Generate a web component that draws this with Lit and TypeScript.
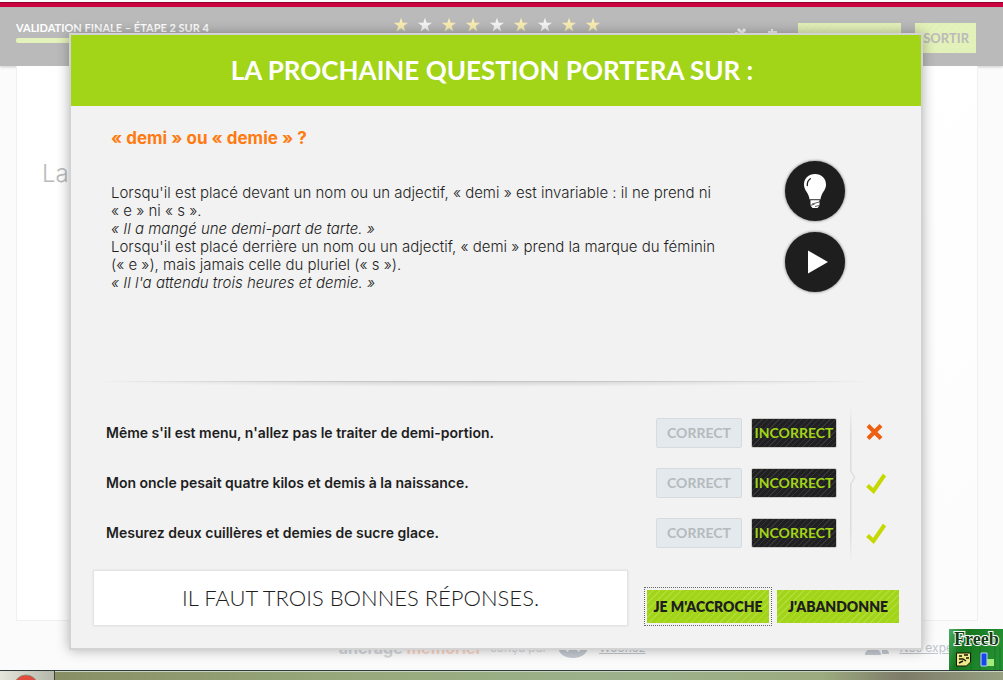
import { LitElement, html, css, svg } from "lit";
import { customElement, property } from "lit/decorators.js";

const BULB = svg`
  <path fill="#fff" d="M20 0C13.500 0 9 4.500 9 10.500c0 5 3 7 4.500 11 .8 2 .9 3 1 4h11c.1-1 .2-2 1-4 1.500-4 4.500-6 4.500-11C31 4.500 26.500 0 20 0z"/>
  <path fill="none" stroke="#1e1e1e" stroke-width="1.300" stroke-linecap="round" d="M12.300 11.500c-.2-3 .8-5.300 3-6.800"/>
  <path fill="#fff" d="M15.500 26h9v5.500L22.500 34h-5l-2-2.500z"/>
  <path stroke="#1e1e1e" stroke-width=".7" fill="none" d="M14.500 25.800h11M17 30l9-2.500M14.500 31.500l5-1.200M20 32.500l6-1.500"/>`;

@customElement("verdict-mark")
class VerdictMark extends LitElement {
  @property({ type: Boolean }) right = false;
  static styles = css`
    :host { display: block; width: 22px; height: 22px; }
    svg { display: block; }
  `;
  render() {
    return this.right
      ? html`<svg width="22" height="22" viewBox="0 0 22 22" role="img" aria-label="Bonne réponse"><path d="M2.500 13.500l6 5.500L19.500 3" fill="none" stroke="#c6d800" stroke-width="4"/></svg>`
      : html`<svg width="22" height="22" viewBox="0 0 22 22" role="img" aria-label="Mauvaise réponse"><path d="M3 3.500l13 13M16 3.500l-13 13" fill="none" stroke="#ee6010" stroke-width="4"/></svg>`;
  }
}

@customElement("rule-dialog")
class RuleDialog extends LitElement {
  static styles = css`
    :host {
      display: block;
      box-sizing: border-box;
      border: 2px solid #d3d3d3;
      background: #f2f2f2;
      box-shadow: 0 0 12px rgba(0, 0, 0, 0.3);
      color: #1e1e1e;
      font-family: Inter, "Liberation Sans", sans-serif;
    }
    .title {
      margin: 0;
      background: #a2d417;
      color: #fff;
      font: 700 26px/71px Lato, sans-serif;
      text-align: center;
      white-space: nowrap;
      padding-right: 8px;
    }
    .lesson {
      display: grid;
      grid-template-columns: 1fr 60px;
      padding: 22px 76px 0 40px;
      min-height: 252px;
    }
    .topic { margin: 0 0 36px; font-size: 17px; line-height: 20px; font-weight: 700; color: #ff7a10; }
    .text { margin: 0; font-size: 15px; line-height: 18px; font-weight: 300; white-space: nowrap; }
    .tools { display: flex; flex-direction: column; gap: 11px; padding-top: 33px; }
    .round {
      display: grid;
      place-items: center;
      width: 60px;
      height: 60px;
      padding: 0;
      border: 0;
      border-radius: 50%;
      background: #1e1e1e;
      box-shadow: 0 0 3px rgba(0, 0, 0, 0.6);
    }
    .rule {
      height: 6px;
      margin: 1px 46px 0 22px;
      border: 0;
      background:
        linear-gradient(90deg, transparent, #c6c6c6 35%, #c6c6c6 65%, transparent) top / 100% 1px no-repeat,
        radial-gradient(ellipse 50% 100% at 50% 0, rgba(0, 0, 0, 0.14), transparent);
    }
    .quiz { display: grid; grid-template-columns: 1fr 14px 22px; column-gap: 2px; padding: 17px 34px 0 35px; }
    .answers, .marks { display: grid; gap: 20px; margin: 0; padding: 14px 0; list-style: none; }
    .answer { display: grid; grid-template-columns: 1fr 86px 86px; column-gap: 9px; align-items: center; height: 30px; padding-right: 10px; }
    .phrase { font-size: 14px; line-height: 18px; font-weight: 600; white-space: nowrap; }
    .choice {
      box-sizing: border-box;
      height: 30px;
      padding: 0;
      border: 1px solid #d7dbdd;
      border-radius: 2px;
      background: #e4e9ed;
      color: #b4babd;
      font: 700 14px/28px Lato, sans-serif;
    }
    .picked {
      border-color: #cbcbc8;
      color: #a2d417;
      background: repeating-linear-gradient(135deg, #201f21 0 3px, #353436 3px 4px);
    }
    .brace { display: block; height: 100%; width: 14px; }
    .mark { display: grid; place-items: center; height: 30px; }
    .bottom { display: grid; grid-template-columns: 1fr auto; gap: 16px; align-items: center; padding: 8px 22px 22px; }
    .notice {
      margin: 0;
      background: #fff;
      border: 1px solid #e4e4e4;
      box-shadow: 0 0 2px rgba(0, 0, 0, 0.1);
      text-align: center;
      font: 300 22px/54px Lato, sans-serif;
      white-space: nowrap;
    }
    .actions { display: flex; gap: 5px; align-items: center; padding-top: 17px; }
    .action {
      box-sizing: border-box;
      width: 122px;
      height: 33px;
      padding: 0;
      border: 0;
      color: #1e1e1e;
      background: repeating-linear-gradient(135deg, #a2d417 0 4px, #b1dc3b 4px 5px);
      font: 800 14px/33px Lato, sans-serif;
    }
    .focus { padding: 2px; border: 1px dotted #666; }
    .focus .action { display: block; }
  `;

  private answers = [
    { phrase: "Même s'il est menu, n'allez pas le traiter de demi-portion.", right: false },
    { phrase: "Mon oncle pesait quatre kilos et demis à la naissance.", right: true },
    { phrase: "Mesurez deux cuillères et demies de sucre glace.", right: true },
  ];

  render() {
    return html`
      <h1 class="title">LA PROCHAINE QUESTION PORTERA SUR :</h1>
      <section class="lesson">
        <div>
          <h2 class="topic">« demi » ou « demie » ?</h2>
          <p class="text">
            Lorsqu'il est placé devant un nom ou un adjectif, « demi » est invariable : il ne prend ni<br />
            « e » ni « s ».<br />
            <em>« Il a mangé une demi-part de tarte. »</em><br />
            Lorsqu'il est placé derrière un nom ou un adjectif, « demi » prend la marque du féminin<br />
            (« e »), mais jamais celle du pluriel (« s »).<br />
            <em>« Il l'a attendu trois heures et demie. »</em>
          </p>
        </div>
        <div class="tools">
          <button class="round" aria-label="Astuce"><svg width="40" height="34" viewBox="0 0 40 34">${BULB}</svg></button>
          <button class="round" aria-label="Lecture"><svg width="26" height="24" viewBox="0 0 26 24"><path fill="#fff" d="M6 .5v23L26 12z"/></svg></button>
        </div>
      </section>
      <hr class="rule" />
      <section class="quiz">
        <ul class="answers">
          ${this.answers.map(
            (a) => html`<li class="answer">
              <span class="phrase">${a.phrase}</span>
              <button class="choice">CORRECT</button>
              <button class="choice picked">INCORRECT</button>
            </li>`
          )}
        </ul>
        <svg class="brace" viewBox="0 0 14 158" preserveAspectRatio="none" aria-hidden="true">
          <defs>
            <linearGradient id="fade" x2="0" y2="1">
              <stop offset="0" stop-color="#dcdcdc" stop-opacity="0" />
              <stop offset=".2" stop-color="#dcdcdc" />
              <stop offset=".8" stop-color="#dcdcdc" />
              <stop offset="1" stop-color="#dcdcdc" stop-opacity="0" />
            </linearGradient>
          </defs>
          <path fill="url(#fade)" d="M1 0h1.500v67l4 6.500-4 6.500v78H1V80l4-6.500L1 67z" />
        </svg>
        <ul class="marks">
          ${this.answers.map((a) => html`<li class="mark"><verdict-mark ?right=${a.right}></verdict-mark></li>`)}
        </ul>
      </section>
      <section class="bottom">
        <p class="notice">IL FAUT TROIS BONNES RÉPONSES.</p>
        <div class="actions">
          <div class="focus"><button class="action">JE M'ACCROCHE</button></div>
          <button class="action">J'ABANDONNE</button>
        </div>
      </section>
    `;
  }
}

@customElement("app-root")
class AppRoot extends LitElement {
  static styles = css`
    :host {
      display: flex;
      flex-direction: column;
      position: relative;
      height: 100vh;
      min-height: 660px;
      overflow: hidden;
      background: #fbfbfb;
      font-family: Inter, "Liberation Sans", sans-serif;
    }
    .strip { flex: none; height: 4px; margin-top: 2px; border-top: 1px solid #90002c; background: #cc0040; }
    .top {
      flex: none;
      box-sizing: border-box;
      display: grid;
      grid-template-columns: 1fr auto 1fr;
      height: 59px;
      padding: 0 27px 0 16px;
      background: #bababa;
      box-shadow: 0 1px 3px rgba(0, 0, 0, 0.2);
    }
    .step { padding-top: 13px; color: #fff; font: 700 11px/16px Lato, sans-serif; white-space: nowrap; }
    .bar { width: 188px; height: 5px; margin-top: 2px; border-radius: 2px; background: #e3f1ba; }
    .stars { display: flex; gap: 8px; padding-top: 10px; }
    .star { width: 16px; height: 16px; }
    .right { display: flex; justify-content: flex-end; gap: 14px; padding-top: 16px; }
    .specks { width: 44px; height: 16px; margin-right: 6px; }
    .ghost {
      box-sizing: border-box;
      height: 30px;
      padding: 0 7px;
      border: 0;
      background: repeating-linear-gradient(135deg, #e3f1ba 0 4px, #e0f0b4 4px 5px);
      color: #bababa;
      font: 700 13px/30px Lato, sans-serif;
      text-align: right;
    }
    .wide { width: 103px; }
    .exit { width: 61px; }
    .sheet {
      flex: 1;
      margin: 0 25px 0 16px;
      border: 1px solid #f0f0f0;
      border-top: 0;
      background: linear-gradient(135deg, #fff 60%, #fcfcfc);
      padding: 94px 25px 0;
      color: #bababa;
      font-size: 24px;
      line-height: 28px;
      font-weight: 300;
    }
    .foot {
      flex: none;
      display: flex;
      justify-content: flex-end;
      align-items: center;
      height: 20px;
      padding: 17px 50px 12px 0;
      gap: 10px;
      font-size: 12px;
      line-height: 16px;
      color: #d3d6db;
      white-space: nowrap;
    }
    .brand { font-size: 16px; font-weight: 700; }
    .accent { color: #fbd5c5; }
    .link { color: #c0c4cc; }
    .experts { margin-left: 210px; }
    .overlay { position: absolute; inset: 33px 80px auto 69px; }
    .taskbar {
      flex: none;
      display: flex;
      height: 9px;
      border-top: 1px solid #30393c;
      background:
        linear-gradient(#c5d3c0, #c5d3c0) top / 100% 1px no-repeat,
        linear-gradient(90deg, #85895f, #97a97b 34%, #9cb18b 62%, #9cab80 82%, #7d7b68 90%, #96a180);
    }
    .start { width: 54px; border-right: 1px solid #3c463c; background: linear-gradient(90deg, #e4e6dc, #b5b7aa); overflow: hidden; }
    .orb { display: block; }
    .gadget { position: absolute; right: 0; bottom: 10px; width: 54px; height: 41px; }
  `;

  private stars = [1, 0, 1, 1, 0, 1, 0, 1, 1];

  render() {
    return html`
      <div class="strip"></div>
      <header class="top">
        <div>
          <div class="step">VALIDATION FINALE – ÉTAPE 2 SUR 4</div>
          <div class="bar"></div>
        </div>
        <div class="stars">
          ${this.stars.map(
            (on) => html`<svg class="star" viewBox="0 0 16 16" aria-hidden="true">
              <path fill=${on ? "#faeeb4" : "#f5f5f5"} d="M9 .8l1.700 5h5.300l-4.300 3.300 1.600 5.400L9 11.300l-4.400 3.200 1.600-5.400L1.800 5.800h5.500z" />
            </svg>`
          )}
        </div>
        <div class="right">
          <svg class="specks" viewBox="0 0 44 16" aria-hidden="true">
            <path fill="none" stroke="#f2f2f2" stroke-width="3" d="M4 6l4 4 3-4" />
            <path fill="none" stroke="#eee" stroke-width="2" d="M1 10h3M38 6v5M34 9h9" />
          </svg>
          <button class="ghost wide" aria-label="Options"></button>
          <button class="ghost exit">SORTIR</button>
        </div>
      </header>
      <main class="sheet">La</main>
      <footer class="foot">
        <span class="brand">ancrage <span class="accent">mémoriel</span></span>
        <span>conçu par</span>
        <svg width="32" height="24" viewBox="0 0 32 24" aria-hidden="true">
          <path fill="#c3c8d0" d="M1 10h6l3 6 6-5 6 5 3-6h6c0 8-7 12-15 12S1 18 1 10z" />
        </svg>
        <a class="link" href="#">Woonoz</a>
        <svg class="experts" width="24" height="16" viewBox="0 0 24 16" aria-hidden="true">
          <circle cx="9" cy="4" r="4" fill="#c3c8d0" /><circle cx="18" cy="5" r="3" fill="#c3c8d0" />
          <path fill="#c3c8d0" d="M0 15c0-5 4-6 8-6s8 1 8 6zM17 14h7c0-4-3-5-7-5z" />
        </svg>
        <a class="link" href="#">Nos expe</a>
      </footer>
      <div class="taskbar">
        <div class="start">
          <svg class="orb" width="54" height="9" viewBox="0 0 54 9" aria-hidden="true"><circle cx="26" cy="16" r="12" fill="#e24a3c" stroke="#8f8878" /></svg>
        </div>
      </div>
      <div class="overlay"><rule-dialog role="dialog" aria-modal="true"></rule-dialog></div>
      <svg class="gadget" viewBox="0 0 54 41">
        <defs>
          <linearGradient id="g" x2="1" y2=".3"><stop stop-color="#4cae62" /><stop offset=".35" stop-color="#16761f" /><stop offset="1" stop-color="#249032" /></linearGradient>
        </defs>
        <path fill="url(#g)" d="M0 0h54v41H0z" />
        <path stroke="#0b5a18" stroke-opacity=".4" d="M8 18v23M22 18v23M31 18v23M46 18v23M51 18v23" />
        <text x="5" y="16" font-family="Liberation Serif, serif" font-size="18" font-weight="700" fill="#123c14" stroke="#fff" stroke-width="2" paint-order="stroke">Freeb</text>
        <path fill="#f0ea8c" stroke="#181800" d="M7.500 24h14v9l-4 4h-10z" />
        <path fill="none" stroke="#181800" stroke-width="1.500" d="M10 27h3M15 26h4M10 30h4l3 2M10 34l4-2M17 29h3" />
        <path fill="#1945ee" stroke="#b9d4ff" d="M32 24h6v13h-6z" /><path fill="#a5ed7b" d="M38 30h7v7h-7z" />
      </svg>
    `;
  }
}
